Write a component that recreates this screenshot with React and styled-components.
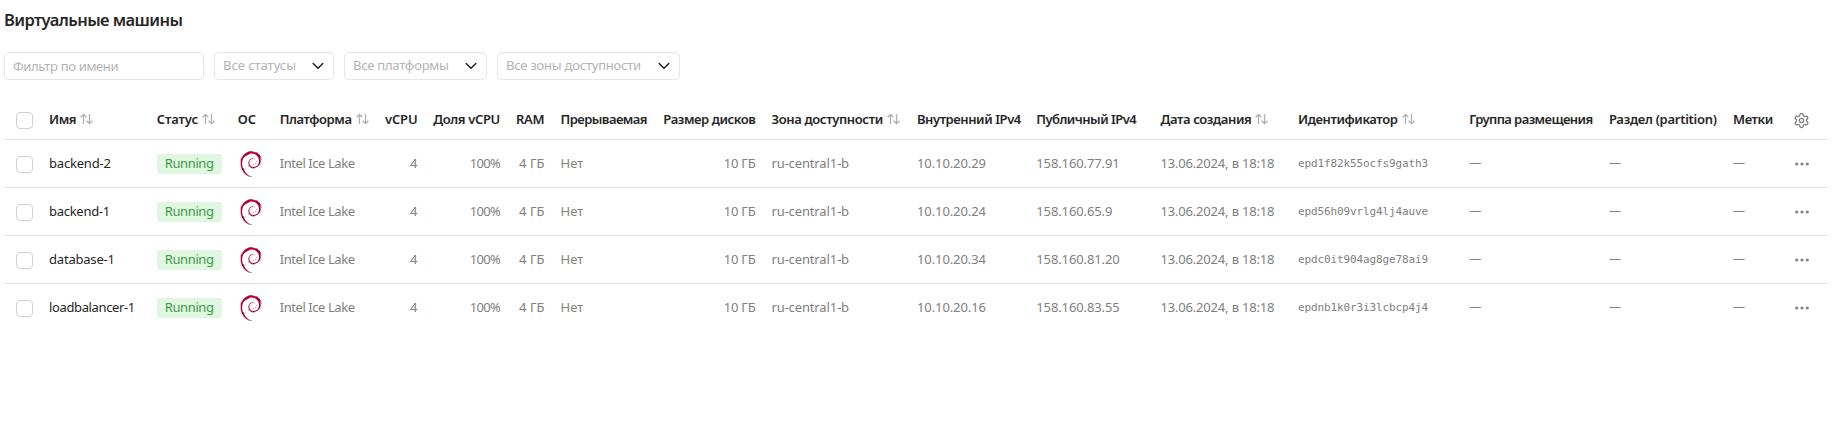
import React from 'react';
import styled, { createGlobalStyle } from 'styled-components';
import { Settings } from 'lucide-react';
import { SiDebian } from 'react-icons/si';

const GlobalStyle = createGlobalStyle`
  *, *::before, *::after { box-sizing: border-box; }
  body { margin: 0; background: #fff; }
`;

const Page = styled.main`
  width: 1848px;
  min-height: 443px;
  padding: 8px 20px 0 4px;
  font: 400 13px/20px "Noto Sans", "Open Sans", sans-serif;
  color: #262626;
`;

const Title = styled.h1`
  margin: 0;
  font-size: 16.5px;
  font-weight: 600;
  line-height: 24px;
  letter-spacing: -0.58px;
`;

const Filters = styled.div`
  display: flex;
  gap: 10px;
  margin-top: 20px;
`;

const NameInput = styled.input`
  width: 200px;
  height: 28px;
  padding: 0 8px 1px;
  border: 1px solid #e5e5e5;
  border-radius: 5px;
  outline: none;
  background: #fff;
  font: inherit;
  letter-spacing: -0.33px;
  &::placeholder { color: #b3b3b3; opacity: 1; }
`;

const SelectButton = styled.button`
  display: flex;
  align-items: center;
  justify-content: space-between;
  width: ${(p) => p.$width}px;
  height: 28px;
  padding: 0 9px 2px 8px;
  border: 1px solid #e5e5e5;
  border-radius: 5px;
  background: #fff;
  font: inherit;
  letter-spacing: ${(p) => p.$track}px;
  white-space: nowrap;
  color: #b3b3b3;
`;

const ChevronSvg = styled.svg`
  flex: none;
  width: 12px;
  height: 8px;
  margin-top: 2px;
`;

const Table = styled.div`
  margin-top: 20px;
`;

const Row = styled.div`
  display: grid;
  grid-template-columns:
    37px 107.7px 81px 42px 104.8px 49px 82.5px 44.5px 103.5px 107.5px
    145.5px 119.3px 124.2px 137.5px 171.3px 139.7px 124px 54.5px 48px;
  height: 48px;
  padding-top: 13px;
  border-bottom: 1px solid #e5e5e5;
  color: #808080;
  &:last-child { border-bottom: none; }
`;

const HeadRow = styled(Row)`
  height: 40px;
  padding-top: 9px;
  font-weight: 600;
  color: #262626;
`;

const Cell = styled.div`
  display: flex;
  align-items: flex-start;
  justify-content: ${(p) => (p.$right ? 'flex-end' : 'flex-start')};
  padding: 0 8px;
  white-space: nowrap;
  letter-spacing: ${(p) => p.$track || 0}px;
`;

const NameCell = styled(Cell)`
  color: #262626;
`;

const CheckCell = styled.div`
  padding: 3px 0 0 12px;
`;

const Checkbox = styled.span`
  display: block;
  width: 17px;
  height: 17px;
  border: 1px solid #d0d0d0;
  border-radius: 4px;
  background: #fff;
`;

const Badge = styled.span`
  width: 65px;
  height: 20px;
  margin-top: 1px;
  border-radius: 3px;
  background: #e1f6e1;
  color: #3a9d3f;
  line-height: 18px;
  text-align: center;
`;

const OsIcon = styled(SiDebian)`
  width: 26px;
  height: 26px;
  margin-top: -2px;
  color: #a80030;
  stroke: #a80030;
  stroke-width: 0.12px;
`;

const Mono = styled.span`
  font-family: "DejaVu Sans Mono", monospace;
  font-size: 11px;
  line-height: 22px;
`;

const Dash = styled.span`
  font-size: 12px;
`;

const Actions = styled.div`
  display: flex;
  justify-content: center;
  align-items: center;
  height: 22px;
  padding-right: 3px;
  color: #808080;
`;

const SortSvg = styled.svg`
  flex: none;
  width: 13px;
  height: 12px;
  margin: 4px 0 0 4px;
`;

const SortIcon = () => (
  <SortSvg viewBox="0 0 13 12" fill="none" stroke="#b0b0b0" strokeWidth="1.3">
    <path d="M3.5 11V1.3M.6 4.2l2.9-2.9 2.9 2.9M9.5 1v9.7M6.6 7.8l2.9 2.9 2.9-2.9" />
  </SortSvg>
);

const Chevron = () => (
  <ChevronSvg viewBox="0 0 12 8" fill="none" stroke="#1a1a1a" strokeWidth="1.4" strokeLinecap="round" strokeLinejoin="round">
    <path d="M1.2 1.6L6 6.3l4.8-4.7" />
  </ChevronSvg>
);

const Dots = () => (
  <svg width="14" height="4" viewBox="0 0 14 4" fill="currentColor">
    <circle cx="1.7" cy="2" r="1.6" />
    <circle cx="7" cy="2" r="1.6" />
    <circle cx="12.3" cy="2" r="1.6" />
  </svg>
);

const filters = [
  { label: 'Все статусы', width: 120, track: -0.03 },
  { label: 'Все платформы', width: 143, track: -0.24 },
  { label: 'Все зоны доступности', width: 183, track: -0.22 },
];

const columns = [
  { label: 'Имя', sort: true, track: -0.4 },
  { label: 'Статус', sort: true, track: -0.1 },
  { label: 'ОС', track: 0 },
  { label: 'Платформа', sort: true, track: -0.42 },
  { label: 'vCPU', right: true, track: -0.15 },
  { label: 'Доля vCPU', right: true, track: -0.35 },
  { label: 'RAM', right: true, track: -0.2 },
  { label: 'Прерываемая', track: -0.54 },
  { label: 'Размер дисков', right: true, track: -0.41 },
  { label: 'Зона доступности', sort: true, track: -0.36 },
  { label: 'Внутренний IPv4', track: -0.43 },
  { label: 'Публичный IPv4', track: -0.55 },
  { label: 'Дата создания', sort: true, track: -0.38 },
  { label: 'Идентификатор', sort: true, track: -0.39 },
  { label: 'Группа размещения', track: -0.58 },
  { label: 'Раздел (partition)', track: -0.28 },
  { label: 'Метки', track: -0.4 },
];

const machines = [
  { name: 'backend-2', track: -0.2, local: '10.10.20.29', pub: '158.160.77.91', id: 'epd1f82k55ocfs9gath3' },
  { name: 'backend-1', track: -0.28, local: '10.10.20.24', pub: '158.160.65.9', id: 'epd56h09vrlg4lj4auve' },
  { name: 'database-1', track: -0.2, local: '10.10.20.34', pub: '158.160.81.20', id: 'epdc0it904ag8ge78ai9' },
  { name: 'loadbalancer-1', track: -0.37, local: '10.10.20.16', pub: '158.160.83.55', id: 'epdnb1k0r3i3lcbcp4j4' },
];

const MachineRow = ({ vm }) => (
  <Row>
    <CheckCell><Checkbox /></CheckCell>
    <NameCell $track={vm.track}>{vm.name}</NameCell>
    <Cell $track={-0.4}><Badge>Running</Badge></Cell>
    <Cell><OsIcon /></Cell>
    <Cell $track={-0.43}>Intel Ice Lake</Cell>
    <Cell $right>4</Cell>
    <Cell $right $track={-0.7}>100%</Cell>
    <Cell $right>4 ГБ</Cell>
    <Cell>Нет</Cell>
    <Cell $right $track={-0.22}>10 ГБ</Cell>
    <Cell $track={-0.15}>ru-central1-b</Cell>
    <Cell $track={-0.1}>{vm.local}</Cell>
    <Cell $track={-0.12}>{vm.pub}</Cell>
    <Cell $track={-0.18}>13.06.2024, в 18:18</Cell>
    <Cell $track={-0.12}><Mono>{vm.id}</Mono></Cell>
    <Cell><Dash>—</Dash></Cell>
    <Cell><Dash>—</Dash></Cell>
    <Cell><Dash>—</Dash></Cell>
    <Actions><Dots /></Actions>
  </Row>
);

export default function App() {
  return (
    <>
      <GlobalStyle />
      <Page>
        <Title>Виртуальные машины</Title>
        <Filters>
          <NameInput placeholder="Фильтр по имени" />
          {filters.map((f) => (
            <SelectButton key={f.label} $width={f.width} $track={f.track}>
              {f.label}
              <Chevron />
            </SelectButton>
          ))}
        </Filters>
        <Table>
          <HeadRow>
            <CheckCell><Checkbox /></CheckCell>
            {columns.map((c) => (
              <Cell key={c.label} $right={c.right} $track={c.track}>
                {c.label}
                {c.sort && <SortIcon />}
              </Cell>
            ))}
            <Actions><Settings size={17} strokeWidth={1.9} /></Actions>
          </HeadRow>
          {machines.map((vm) => <MachineRow key={vm.name} vm={vm} />)}
        </Table>
      </Page>
    </>
  );
}
